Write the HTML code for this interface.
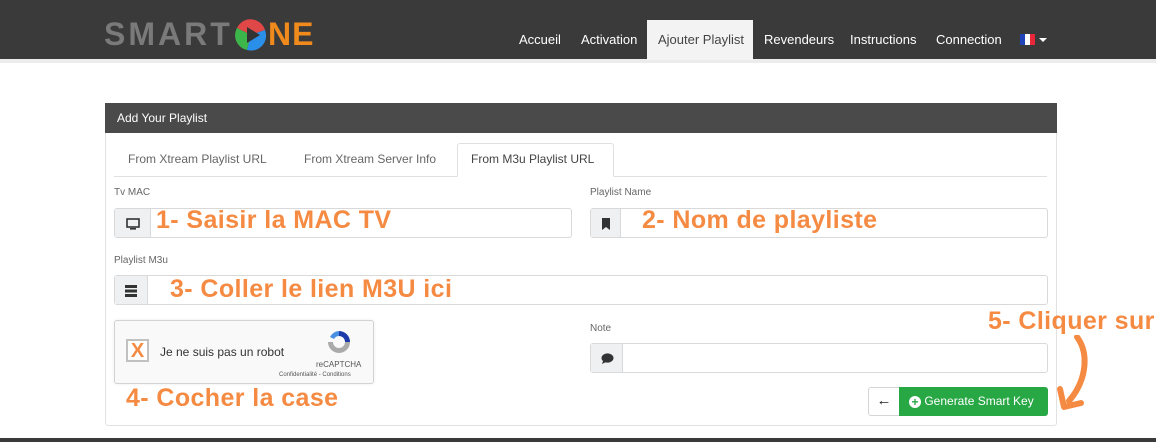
<!DOCTYPE html><html><head><meta charset="utf-8"><style>
*{box-sizing:border-box;margin:0;padding:0}
body{width:1156px;height:442px;background:#fff;font-family:"Liberation Sans",sans-serif;position:relative;overflow:hidden}
.a{position:absolute}
.nav{left:0;top:0;width:1156px;height:59px;background:#3b3a3a}
.strip{left:0;top:59px;width:1156px;height:4px;background:#ececec}
.ni{top:32px;color:#fff;font-size:13px}
.lbl{font-size:10px;color:#666}
.inp{border:1px solid #d9d9d9;border-radius:3px;background:#fff}
.ig{background:#eef0f2;border-right:1px solid #d9d9d9;height:100%;position:absolute;left:0;top:0}
.or{color:#f58a42;font-weight:bold;font-size:25px;white-space:nowrap;letter-spacing:0.4px}
</style></head><body>
<div class="a nav"></div><div class="a strip"></div>
<div class="a" style="left:104px;top:16px;font-size:32px;color:#7a7a7a;letter-spacing:3px;font-weight:bold">SMART</div>
<svg class="a" style="left:234px;top:18px" width="34" height="34" viewBox="0 0 34 34"><path d="M17 17 L3 10 A15 15 0 0 1 31 12Z" fill="#e04848"/><path d="M17 17 L3 10 A15 15 0 0 0 13 32Z" fill="#3cb54a"/><path d="M17 17 L31 12 A15 15 0 0 1 13 32Z" fill="#2a8fe8"/><path d="M13 9 L26 17 L13 25Z" fill="#333"/></svg>
<div class="a" style="left:268px;top:16px;font-size:32px;color:#f08a1c;font-weight:bold;letter-spacing:1px">NE</div>
<div class="a" style="left:647px;top:20px;width:106px;height:40px;background:#f3f3f3"></div>
<div class="a ni" style="left:519px">Accueil</div>
<div class="a ni" style="left:581px">Activation</div>
<div class="a ni" style="left:658px;color:#444">Ajouter Playlist</div>
<div class="a ni" style="left:764px">Revendeurs</div>
<div class="a ni" style="left:850px">Instructions</div>
<div class="a ni" style="left:936px">Connection</div>
<div class="a" style="left:1020px;top:34px;width:15px;height:11px;background:linear-gradient(90deg,#2143b8 33%,#fff 33% 66%,#e8283a 66%)"></div>
<div class="a" style="left:1039px;top:38px;border:4px solid transparent;border-top-color:#fff;border-bottom:0"></div>

<div class="a" style="left:105px;top:103px;width:952px;height:323px;border:1px solid #e2e2e2;border-radius:3px"></div>
<div class="a" style="left:105px;top:103px;width:952px;height:30px;background:#4a4a4a;color:#fff;font-size:12px;padding:8px 12px">Add Your Playlist</div>
<div class="a" style="left:114px;top:176px;width:933px;height:1px;background:#e0e0e0"></div>
<div class="a" style="left:457px;top:143px;width:157px;height:34px;border:1px solid #e0e0e0;border-bottom-color:#fff;border-radius:3px 3px 0 0;background:#fff"></div>
<div class="a" style="left:128px;top:152px;font-size:12px;color:#666">From Xtream Playlist URL</div>
<div class="a" style="left:304px;top:152px;font-size:12px;color:#666">From Xtream Server Info</div>
<div class="a" style="left:471px;top:152px;font-size:12px;color:#444">From M3u Playlist URL</div>

<div class="a lbl" style="left:114px;top:187px">Tv MAC</div>
<div class="a inp" style="left:114px;top:208px;width:458px;height:30px"><div class="ig" style="width:36px"></div>
<svg class="a" style="left:11px;top:9px" width="14" height="12" viewBox="0 0 14 12"><rect x="1" y="1" width="12" height="8" fill="none" stroke="#333" stroke-width="1.6"/><rect x="4" y="10" width="6" height="1.6" fill="#333"/></svg></div>
<div class="a or" style="left:156px;top:206px">1- Saisir la MAC TV</div>
<div class="a lbl" style="left:590px;top:187px">Playlist Name</div>
<div class="a inp" style="left:590px;top:208px;width:458px;height:30px"><div class="ig" style="width:30px"></div>
<svg class="a" style="left:10px;top:9px" width="10" height="12" viewBox="0 0 10 12"><path d="M1 0H9V12L5 9L1 12Z" fill="#333"/></svg></div>
<div class="a or" style="left:642px;top:206px">2- Nom de playliste</div>

<div class="a lbl" style="left:114px;top:255px">Playlist M3u</div>
<div class="a inp" style="left:114px;top:275px;width:934px;height:30px"><div class="ig" style="width:33px"></div>
<svg class="a" style="left:10px;top:9px" width="12" height="12" viewBox="0 0 12 12"><rect y="0" width="12" height="3" fill="#333"/><rect y="4.5" width="12" height="3" fill="#333"/><rect y="9" width="12" height="3" fill="#333"/></svg></div>
<div class="a or" style="left:170px;top:275px">3- Coller le lien M3U ici</div>

<div class="a" style="left:114px;top:320px;width:260px;height:64px;background:#f9f9f9;border:1px solid #d3d3d3;border-radius:3px;box-shadow:0 0 3px rgba(0,0,0,.08)"></div>
<div class="a" style="left:126px;top:339px;width:23px;height:23px;border:2px solid #c1c1c1;background:#fff;color:#f58a42;font-size:20px;font-weight:bold;text-align:center;line-height:20px">X</div>
<div class="a" style="left:160px;top:345px;font-size:12px;color:#333">Je ne suis pas un robot</div>
<svg class="a" style="left:326px;top:329px" width="27" height="26" viewBox="0 0 27 26"><path d="M13 2A11 11 0 0 1 24 13H19A6 6 0 0 0 13 7Z" fill="#1c3aa9"/><path d="M4 8A11 11 0 0 1 13 2V7A6 6 0 0 0 8 10Z" fill="#4a90e2"/><path d="M2 13A11 11 0 0 0 24 13H19A6 6 0 0 1 7 13Z" fill="#aaa"/></svg>
<div class="a" style="left:316px;top:360px;font-size:8px;color:#555">reCAPTCHA</div>
<div class="a" style="left:279px;top:372px;font-size:6px;color:#555">Confidentialité - Conditions</div>
<div class="a or" style="left:126px;top:384px">4- Cocher la case</div>

<div class="a lbl" style="left:590px;top:323px">Note</div>
<div class="a inp" style="left:590px;top:343px;width:458px;height:30px"><div class="ig" style="width:32px"></div>
<svg class="a" style="left:10px;top:9px" width="13" height="12" viewBox="0 0 13 12"><ellipse cx="6.5" cy="5" rx="6" ry="4.6" fill="#333"/><path d="M2 8L1 11L5 9Z" fill="#333"/></svg></div>
<div class="a or" style="left:988px;top:307px">5- Cliquer sur</div>
<svg class="a" style="left:1055px;top:335px" width="40" height="80" viewBox="0 0 40 80"><path d="M22 2C34 18 32 45 14 66" fill="none" stroke="#f58a42" stroke-width="6" stroke-linecap="round"/><path d="M5 54L9 72L26 68" fill="none" stroke="#f58a42" stroke-width="6" stroke-linecap="round" stroke-linejoin="round"/></svg>

<div class="a" style="left:868px;top:387px;width:32px;height:29px;border:1px solid #d5d5d5;border-radius:3px 0 0 3px;background:#fff;font-size:15px;text-align:center;line-height:26px;color:#222">←</div>
<div class="a" style="left:899px;top:387px;width:149px;height:29px;background:#28a745;border-radius:0 3px 3px 0;color:#fff;font-size:12px;line-height:29px;padding-left:10px"><span style="display:inline-block;width:12px;height:12px;border-radius:50%;background:#fff;color:#28a745;font-size:12px;line-height:12px;text-align:center;font-weight:bold;vertical-align:-1px">+</span> Generate Smart Key</div>
<div class="a" style="left:0;top:438px;width:1156px;height:4px;background:#3b3a3a"></div>
</body></html>
